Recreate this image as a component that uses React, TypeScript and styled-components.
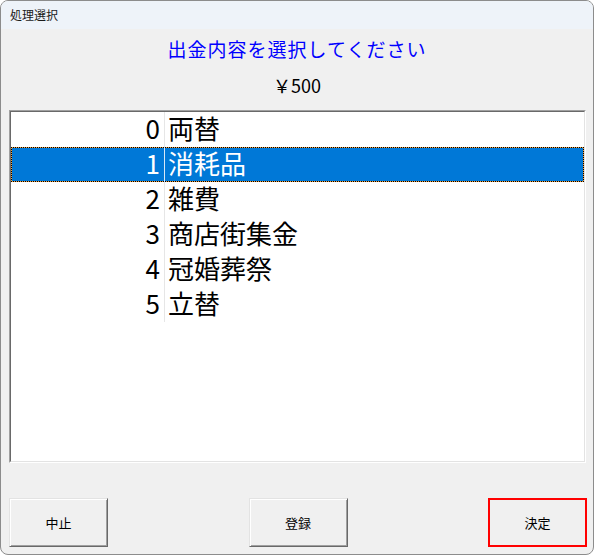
import React from "react";
import styled, { createGlobalStyle } from "styled-components";

const Global = createGlobalStyle`
  html, body { margin: 0; padding: 0; background: #ffffff; }
  * { box-sizing: border-box; }
`;

const Window = styled.div`
  width: 594px;
  height: 555px;
  border: 1px solid #8c8c8c;
  border-radius: 8px;
  overflow: hidden;
  background: #f0f0f0;
  display: flex;
  flex-direction: column;
  font-family: "Noto Sans CJK JP", "Noto Sans", sans-serif;
`;

const TitleBar = styled.div`
  height: 28px;
  line-height: 28px;
  padding-left: 9px;
  background: #eef3f9;
  font-size: 12px;
  color: #1a1a1a;
`;

const Heading = styled.div`
  margin-top: 7px;
  height: 26px;
  line-height: 26px;
  text-align: center;
  color: #0000ff;
  font-size: 19px;
  letter-spacing: 1px;
`;

const Amount = styled.div`
  margin-top: 12px;
  height: 22px;
  line-height: 22px;
  text-align: center;
  font-size: 18px;
  color: #000;
`;

const ListOuter = styled.div`
  margin: 14px 7px 0 8px;
  height: 353px;
  border: 1px solid;
  border-color: #a0a0a0 #ffffff #ffffff #a0a0a0;
  display: flex;
`;

const ListInner = styled.div`
  flex: 1;
  border: 1px solid;
  border-color: #696969 #e3e3e3 #e3e3e3 #696969;
  background: #ffffff;
  display: flex;
  flex-direction: column;
`;

const Row = styled.div<{ $selected?: boolean }>`
  height: 35px;
  display: grid;
  grid-template-columns: 154px 1fr;
  align-items: stretch;
  font-size: 26px;
  color: ${(p) => (p.$selected ? "#ffffff" : "#000000")};
  background: ${(p) => (p.$selected ? "#0078d7" : "transparent")};
  ${(p) =>
    p.$selected
      ? `outline: 1px dotted #000000; outline-offset: -1px; box-shadow: inset 0 0 0 1px #f0a040;`
      : ""}
`;

const NumCell = styled.div<{ $selected?: boolean }>`
  text-align: right;
  padding-right: 4px;
  padding-bottom: 3px;
  line-height: 32px;
  border-right: 1px solid ${(p) => (p.$selected ? "#d8e8f6" : "#e6e6e6")};
`;

const NameCell = styled.div`
  padding-left: 3px;
  padding-bottom: 3px;
  line-height: 32px;
`;

const ButtonRow = styled.div`
  margin-top: 35px;
  padding: 0 6px 0 8px;
  display: flex;
  justify-content: space-between;
`;

const Button = styled.button<{ $default?: boolean }>`
  width: 99px;
  height: 49px;
  font-family: "Noto Sans CJK JP", "Noto Sans", sans-serif;
  font-size: 13px;
  color: #000;
  background: #f0f0f0;
  padding: 0;
  border: ${(p) => (p.$default ? "2px solid #ff0000" : "1px solid")};
  border-color: ${(p) =>
    p.$default ? "#ff0000" : "#e3e3e3 #696969 #696969 #e3e3e3"};
  box-shadow: ${(p) =>
    p.$default ? "none" : "inset 1px 1px 0 #ffffff, inset -1px -1px 0 #a0a0a0"};
`;

const items = [
  { n: "0", name: "両替" },
  { n: "1", name: "消耗品" },
  { n: "2", name: "雑費" },
  { n: "3", name: "商店街集金" },
  { n: "4", name: "冠婚葬祭" },
  { n: "5", name: "立替" },
];

export default function App() {
  return (
    <>
      <Global />
      <Window>
        <TitleBar>処理選択</TitleBar>
        <Heading>出金内容を選択してください</Heading>
        <Amount>￥500</Amount>
        <ListOuter>
          <ListInner>
            {items.map((it, i) => (
              <Row key={it.n} $selected={i === 1}>
                <NumCell $selected={i === 1}>{it.n}</NumCell>
                <NameCell>{it.name}</NameCell>
              </Row>
            ))}
          </ListInner>
        </ListOuter>
        <ButtonRow>
          <Button>中止</Button>
          <Button>登録</Button>
          <Button $default>決定</Button>
        </ButtonRow>
      </Window>
    </>
  );
}
